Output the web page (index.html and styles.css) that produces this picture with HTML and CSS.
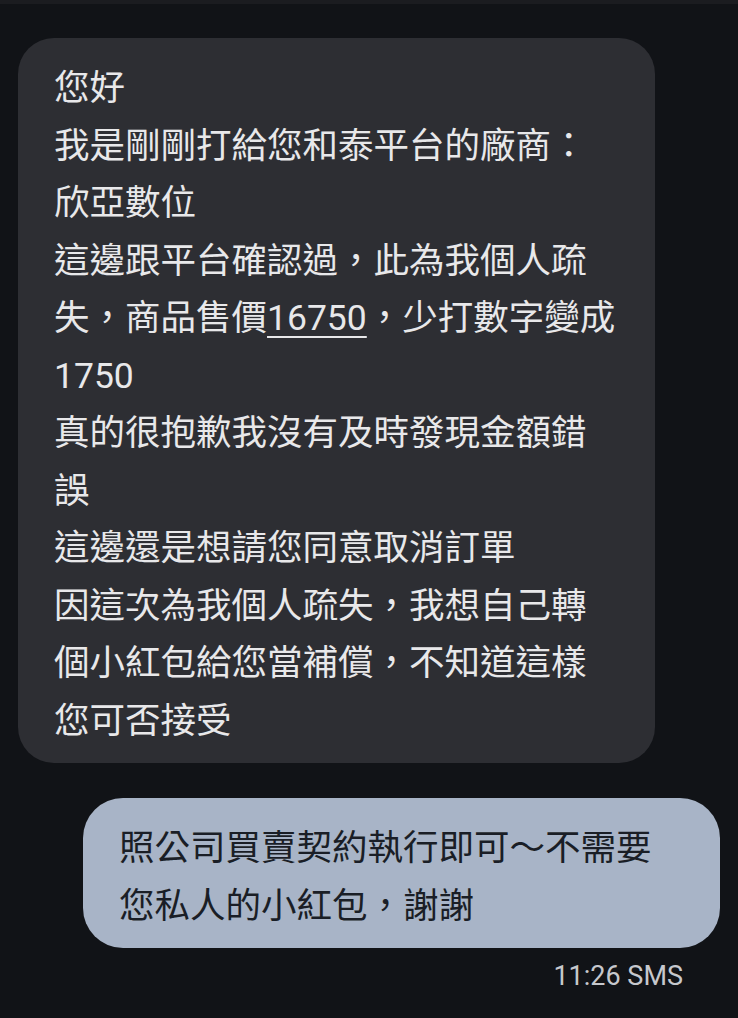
FILE: index.html
```html
<!DOCTYPE html>
<html lang="zh-Hant">
<head>
<meta charset="utf-8">
<link rel="stylesheet" href="styles.css">
</head>
<body>
<div class="topband"></div>
<main class="thread">
  <div class="bubble incoming">
    <div class="line">您好</div>
    <div class="line">我是剛剛打給您和泰平台的廠商：</div>
    <div class="line">欣亞數位</div>
    <div class="line">這邊跟平台確認過，此為我個人疏</div>
    <div class="line">失，商品售價<span class="num-link">16750</span>，少打數字變成</div>
    <div class="line">1750</div>
    <div class="line">真的很抱歉我沒有及時發現金額錯</div>
    <div class="line">誤</div>
    <div class="line">這邊還是想請您同意取消訂單</div>
    <div class="line">因這次為我個人疏失，我想自己轉</div>
    <div class="line">個小紅包給您當補償，不知道這樣</div>
    <div class="line">您可否接受</div>
  </div>
  <div class="bubble outgoing">
    <div class="line">照公司買賣契約執行即可～不需要</div>
    <div class="line">您私人的小紅包，謝謝</div>
  </div>
  <div class="meta">11:26 SMS</div>
</main>
</body>
</html>
```

FILE: styles.css
```css
html, body {
  margin: 0;
  padding: 0;
}
body {
  background: #111317;
  font-family: "Roboto", "Noto Sans CJK TC", sans-serif;
  width: 738px;
  height: 1018px;
  overflow: hidden;
}
.topband {
  height: 4px;
  background: #1b1c20;
}
.thread {
  display: flex;
  flex-direction: column;
  padding-top: 34px;
}
.bubble {
  box-sizing: border-box;
  width: 637px;
  font-size: 35.5px;
  line-height: 57.5px;
  padding: 22px 36px 13px 36px;
}
.line {
  white-space: nowrap;
}
.incoming {
  margin-left: 18px;
  background: #2d2e33;
  color: #e8e8ea;
  border-radius: 36px;
}
.num-link {
  text-decoration: underline;
  text-decoration-thickness: 2px;
  text-underline-offset: 6px;
}
.outgoing {
  margin-left: 83px;
  margin-top: 35px;
  background: #a8b4c7;
  color: #1a1e26;
  border-radius: 40px;
}
.meta {
  align-self: flex-end;
  margin-right: 55px;
  margin-top: 11px;
  font-size: 27px;
  line-height: 34px;
  color: #c6c8cd;
}
```
